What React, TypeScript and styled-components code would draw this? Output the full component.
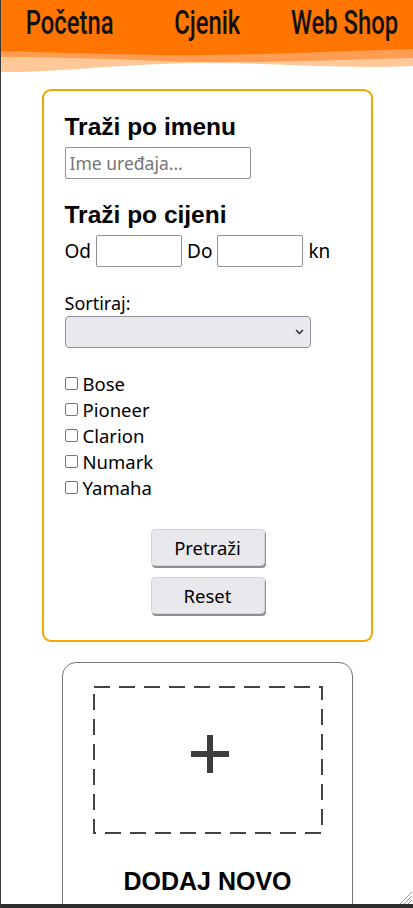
import styled, { createGlobalStyle } from "styled-components";

const GlobalStyle = createGlobalStyle`
  html, body {
    margin: 0;
    padding: 0;
    background: #fff;
  }
  body {
    font-family: "Noto Sans", "Open Sans", sans-serif;
  }
`;

const Frame = styled.div`
  position: relative;
  box-sizing: border-box;
  width: 413px;
  height: 908px;
  overflow: hidden;
  border-left: 1px solid #3a3a3a;
  border-bottom: 4px solid #2e2e2e;
  display: flex;
  flex-direction: column;
`;

const Header = styled.header`
  position: relative;
  height: 74px;
  flex-shrink: 0;
`;

const Wave = styled.svg`
  position: absolute;
  inset: 0;
  width: 100%;
  height: 100%;
`;

const Nav = styled.nav`
  position: relative;
  display: grid;
  grid-template-columns: repeat(3, minmax(0, 1fr));
  padding-top: 2px;
`;

const NavLink = styled.a`
  display: flex;
  justify-content: center;
  color: #111;
  text-decoration: none;
  font-family: Roboto, "Liberation Sans", sans-serif;
  font-weight: 500;
  font-size: 34px;
  line-height: 40px;
  white-space: nowrap;
`;

const NavText = styled.span`
  display: inline-block;
  transform: scaleX(0.7);
`;

const Main = styled.main`
  display: flex;
  flex-direction: column;
  align-items: center;
  padding-top: 15px;
  gap: 20px;
`;

const FilterBox = styled.form`
  box-sizing: border-box;
  width: 331px;
  border: 2px solid #f5a500;
  border-radius: 9px;
  padding: 20px 20px 26px 21px;
  display: flex;
  flex-direction: column;
`;

const Heading = styled.h3`
  margin: 0 0 5px;
  font-family: "Liberation Sans", Arial, sans-serif;
  font-weight: bold;
  font-size: 24.5px;
  line-height: 31px;
  color: #000;
`;

const TextInput = styled.input<{ $w: number }>`
  box-sizing: border-box;
  width: ${(p) => p.$w}px;
  height: 32px;
  border: 1px solid #8f8f9d;
  border-radius: 2px;
  padding: 0 4px;
  font-family: "Noto Sans", sans-serif;
  font-size: 17.5px;
  color: #222;
  &::placeholder {
    color: #767676;
  }
`;

const Spacer = styled.div<{ $h: number }>`
  height: ${(p) => p.$h}px;
`;

const PriceRow = styled.div`
  display: flex;
  align-items: center;
  gap: 5px;
  font-size: 19px;
  color: #000;
`;

const Label = styled.label`
  font-size: 18px;
  line-height: 22px;
  color: #000;
`;

const Select = styled.div`
  box-sizing: border-box;
  width: 246px;
  height: 32px;
  margin-top: 2px;
  background: #e9e9ed;
  border: 1px solid #8f8f9d;
  border-radius: 4px;
  display: flex;
  align-items: center;
  justify-content: flex-end;
  padding-right: 6px;
`;

const CheckList = styled.div`
  display: flex;
  flex-direction: column;
  margin-top: 22px;
`;

const CheckRow = styled.label`
  display: flex;
  align-items: center;
  height: 26px;
  font-size: 18.5px;
  color: #000;
`;

const Box = styled.span`
  box-sizing: border-box;
  width: 13px;
  height: 13px;
  border: 1px solid #76767f;
  border-radius: 2px;
  margin: 1px 5px 0 0;
  background: #fff;
`;

const Buttons = styled.div`
  display: flex;
  flex-direction: column;
  align-items: center;
  gap: 11px;
  margin-top: 29px;
`;

const Button = styled.button`
  box-sizing: border-box;
  width: 114px;
  height: 37px;
  background: #e9e9ed;
  border: 1px solid #d4d4d8;
  border-radius: 4px;
  box-shadow: 1px 2px 0 #8f8f94;
  font-family: "Noto Sans", sans-serif;
  font-size: 18.5px;
  color: #000;
`;

const AddCard = styled.div`
  box-sizing: border-box;
  width: 291px;
  height: 260px;
  flex-shrink: 0;
  margin-left: 1px;
  border: 1px solid #777;
  border-radius: 14px;
  display: flex;
  flex-direction: column;
  align-items: center;
  padding-top: 23px;
`;

const DashedArea = styled.svg`
  display: block;
`;

const AddLabel = styled.div`
  margin-top: 33px;
  font-family: "Liberation Sans", Arial, sans-serif;
  font-weight: bold;
  font-size: 25px;
  color: #000;
`;

const Grip = styled.svg`
  position: absolute;
  right: 1px;
  bottom: 0;
`;

const brands = ["Bose", "Pioneer", "Clarion", "Numark", "Yamaha"];

export default function App() {
  return (
    <>
      <GlobalStyle />
      <Frame>
        <Header>
          <Wave viewBox="0 0 413 74" preserveAspectRatio="none">
            <path d="M0 0H413V66C330 70 250 60 160 64C90 67 40 73 0 72Z" fill="#ffc896" />
            <path d="M0 0H413V58C330 60 250 64 160 61C90 58 40 57 0 57Z" fill="#ff9d52" />
            <path d="M0 0H413V49C330 51 250 56 160 55C90 54 40 52 0 51Z" fill="#ff7500" />
          </Wave>
          <Nav>
            <NavLink href="#">
              <NavText>Početna</NavText>
            </NavLink>
            <NavLink href="#">
              <NavText>Cjenik</NavText>
            </NavLink>
            <NavLink href="#">
              <NavText>Web Shop</NavText>
            </NavLink>
          </Nav>
        </Header>
        <Main>
          <FilterBox onSubmit={(e) => e.preventDefault()}>
            <Heading>Traži po imenu</Heading>
            <TextInput $w={186} placeholder="Ime uređaja..." />
            <Spacer $h={20} />
            <Heading>Traži po cijeni</Heading>
            <PriceRow>
              Od <TextInput $w={86} /> Do <TextInput $w={86} /> kn
            </PriceRow>
            <Spacer $h={25} />
            <Label>Sortiraj:</Label>
            <Select>
              <svg width="9" height="6" viewBox="0 0 9 6">
                <path d="M1 1l3.5 3.5L8 1" stroke="#222" strokeWidth="1.4" fill="none" />
              </svg>
            </Select>
            <CheckList>
              {brands.map((b) => (
                <CheckRow key={b}>
                  <Box />
                  {b}
                </CheckRow>
              ))}
            </CheckList>
            <Buttons>
              <Button type="submit">Pretraži</Button>
              <Button type="button">Reset</Button>
            </Buttons>
          </FilterBox>
          <AddCard>
            <DashedArea width="230" height="148" viewBox="0 0 230 148">
              <rect
                x="1"
                y="1"
                width="228"
                height="146"
                fill="none"
                stroke="#444"
                strokeWidth="2"
                strokeDasharray="16 9"
              />
              <path d="M117 49V87M98 68H136" stroke="#3d3d3d" strokeWidth="6" />
            </DashedArea>
            <AddLabel>DODAJ NOVO</AddLabel>
          </AddCard>
        </Main>
        <Grip width="14" height="14" viewBox="0 0 14 14">
          <path d="M2 14L14 2M6 14L14 6M10 14L14 10" stroke="#999" strokeWidth="1" />
        </Grip>
      </Frame>
    </>
  );
}
